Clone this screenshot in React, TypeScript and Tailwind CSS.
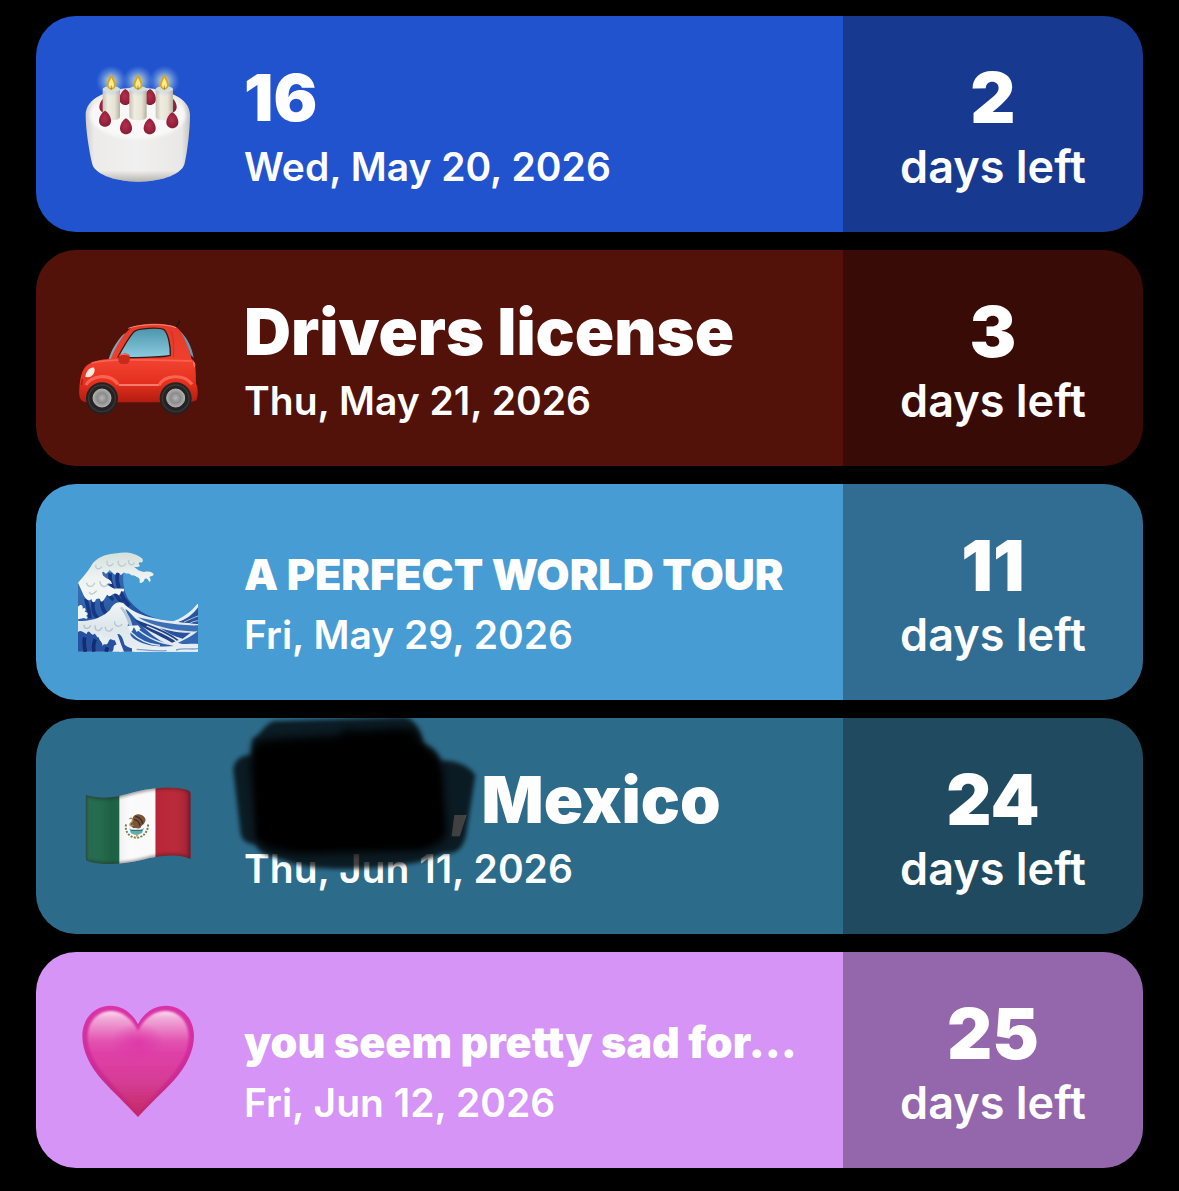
import React from "react";
import clsx from "clsx";

const CakeIcon = () => (
	<svg viewBox="24 27 360 360" className="size-full" aria-hidden="true">
		<defs>
			<linearGradient id="cakeSide" x1="0" x2="1" y1="0" y2="0">
				<stop offset="0" stopColor="#cfcecb" />
				<stop offset="0.08" stopColor="#ecebea" />
				<stop offset="0.5" stopColor="#f1f0f0" />
				<stop offset="0.92" stopColor="#e9e8e6" />
				<stop offset="1" stopColor="#c3c2bc" />
			</linearGradient>
			<linearGradient id="cakeShade" x1="0" x2="0" y1="0" y2="1">
				<stop offset="0.88" stopColor="#8d8c80" stopOpacity="0" />
				<stop offset="1" stopColor="#8d8c80" stopOpacity="0.6" />
			</linearGradient>
			<linearGradient id="candle" x1="0" x2="1" y1="0" y2="0">
				<stop offset="0" stopColor="#c8c4b4" />
				<stop offset="0.3" stopColor="#efede1" />
				<stop offset="0.7" stopColor="#e6e3d6" />
				<stop offset="1" stopColor="#b5b1a2" />
			</linearGradient>
			<radialGradient id="glow">
				<stop offset="0" stopColor="#fff6c0" stopOpacity="0.9" />
				<stop offset="0.5" stopColor="#b5d6dc" stopOpacity="0.5" />
				<stop offset="1" stopColor="#7aabf0" stopOpacity="0" />
			</radialGradient>
			<radialGradient id="berry" cx="0.45" cy="0.45" r="0.6">
				<stop offset="0" stopColor="#b3304c" />
				<stop offset="1" stopColor="#851a35" />
			</radialGradient>
			<filter id="cakeSoft">
				<feGaussianBlur stdDeviation="5" />
			</filter>
			<path id="berryShape" d="M0-24C9-20 18-6 18 6 18 17 10 24 0 24S-18 17-18 6C-18-6-9-20 0-24Z" />
		</defs>
		<path d="M47 180C46 130 115 98 203 98S361 130 360 180C360 225 352 290 344 325 338 355 282 380 205 380S72 355 66 325C58 290 47 225 47 180Z" fill="url(#cakeSide)" />
		<path d="M47 180C46 130 115 98 203 98S361 130 360 180C360 225 352 290 344 325 338 355 282 380 205 380S72 355 66 325C58 290 47 225 47 180Z" fill="url(#cakeShade)" />
		<ellipse cx="203" cy="180" rx="144" ry="72" fill="#f8f8f8" filter="url(#cakeSoft)" />
		<g fill="url(#berry)">
			<use href="#berryShape" x="106" y="150" />
			<use href="#berryShape" x="166" y="126" />
			<use href="#berryShape" x="240" y="126" />
			<use href="#berryShape" x="302" y="150" />
		</g>
		{[124, 204, 283].map((x) => (
			<g key={x} transform={`translate(${x} 0)`}>
				<path d="M-26 102V185C-26 199 26 199 26 185V102Z" fill="url(#candle)" />
				<ellipse cx="0" cy="102" rx="26" ry="9" fill="#eeeadb" />
				<circle cx="0" cy="78" r="46" fill="url(#glow)" />
				<path d="M0 57C6 68 14 80 13 91 12 100 6 104 0 104S-12 100-13 91C-14 80-6 68 0 57Z" fill="#d9a521" />
				<path d="M0 68C4 76 8 83 8 90 8 96 4 99 0 99S-8 96-8 90C-8 83-4 76 0 68Z" fill="#fbe98a" />
				<path d="M0 92V104" stroke="#8a6a2a" strokeWidth="2" />
			</g>
		))}
		<g fill="url(#berry)">
			<use href="#berryShape" x="105" y="191" />
			<use href="#berryShape" x="168" y="214" />
			<use href="#berryShape" x="239" y="214" />
			<use href="#berryShape" x="307" y="196" />
		</g>
	</svg>
);

const CarIcon = () => (
	<svg viewBox="24 -21 360 360" className="size-full" aria-hidden="true">
		<defs>
			<linearGradient id="carBody" x1="0" x2="0" y1="0" y2="1">
				<stop offset="0" stopColor="#e43a2a" />
				<stop offset="0.5" stopColor="#f0402e" />
				<stop offset="0.75" stopColor="#e5301f" />
				<stop offset="1" stopColor="#b21c10" />
			</linearGradient>
			<linearGradient id="carGlass" x1="0" x2="0" y1="0" y2="1">
				<stop offset="0" stopColor="#4b95ab" />
				<stop offset="1" stopColor="#8ccbe0" />
			</linearGradient>
			<radialGradient id="hub">
				<stop offset="0" stopColor="#b5b5b5" />
				<stop offset="0.55" stopColor="#8b8b8b" />
				<stop offset="1" stopColor="#b0b0b0" />
			</radialGradient>
		</defs>
		<path d="M317 68L329 49" stroke="#1c1514" strokeWidth="4" strokeLinecap="round" />
		<path d="M116 162C126 130 142 108 158 90L166 84 134 162Z" fill="#78a8b9" />
		<path d="M28 250C30 215 38 185 58 176 80 165 104 162 122 161 136 128 160 84 184 68 215 52 294 53 320 67 342 84 354 120 365 162 376 168 378 185 378 237 385 245 384 276 379 286L362 292H52C34 290 25 284 28 250Z" fill="url(#carBody)" />
		<path d="M332 80C352 98 366 128 371 158L362 150C354 124 344 100 332 80Z" fill="#639bb0" />
		<path d="M175 70C210 56 290 55 318 68" fill="none" stroke="#f58a78" strokeWidth="3" />
		<path d="M144 156C162 122 178 96 192 80 204 68 270 67 282 74 295 84 302 125 301 151 290 156 160 160 144 156Z" fill="url(#carGlass)" stroke="#391713" strokeWidth="4" strokeLinejoin="round" />
		<path d="M64 174C120 160 240 165 366 168" fill="none" stroke="#ff7562" strokeWidth="5" opacity="0.65" />
		<path d="M303 78C313 102 312 135 310 156" fill="none" stroke="#d42d20" strokeWidth="3" />
		<path d="M146 152C150 144 174 143 178 150 182 160 179 174 170 177H152C144 171 144 160 146 152Z" fill="#c92a1e" />
		<path d="M149 151C156 147 170 147 176 151" stroke="#ff7868" strokeWidth="3" fill="none" />
		<path d="M146 240H268" stroke="#ff9685" strokeWidth="4" />
		<path d="M46 215C48 198 60 186 72 188 78 196 70 216 53 217Z" fill="#ffe9dc" />
		<path d="M38 222C36 230 35 236 34 240" stroke="#a81d12" strokeWidth="4" />
		<path d="M368 168C378 172 378 184 372 188Z" fill="#ff705c" />
		<path d="M48 240C58 215 118 200 144 238" fill="none" stroke="#fa6553" strokeWidth="9" />
		<path d="M268 240C282 210 342 204 366 238" fill="none" stroke="#fa6553" strokeWidth="9" />
		{[96, 317].map((x) => (
			<g key={x}>
				<circle cx={x} cy="280" r="48" fill="#242222" />
				<circle cx={x} cy="280" r="40" fill="none" stroke="#3b3737" strokeWidth="4" />
				<circle cx={x} cy="279" r="27" fill="url(#hub)" stroke="#b2b2b2" strokeWidth="3" />
			</g>
		))}
	</svg>
);

const WaveIcon = () => (
	<svg viewBox="24 -24 360 360" className="size-full" aria-hidden="true">
		<defs>
			<linearGradient id="sea" x1="0" x2="1" y1="0" y2="1">
				<stop offset="0" stopColor="#3f74b8" />
				<stop offset="0.5" stopColor="#2252a0" />
				<stop offset="1" stopColor="#2e63ad" />
			</linearGradient>
			<linearGradient id="foam" x1="0" x2="0" y1="0" y2="1">
				<stop offset="0" stopColor="#d3e0dc" />
				<stop offset="0.5" stopColor="#eef3f2" />
				<stop offset="1" stopColor="#f4f7f7" />
			</linearGradient>
			<linearGradient id="swell" x1="0" x2="0" y1="0" y2="1">
				<stop offset="0" stopColor="#f2f6f6" />
				<stop offset="0.5" stopColor="#dde7ec" />
				<stop offset="1" stopColor="#e8eff3" />
			</linearGradient>
		</defs>
		<path d="M24 130L90 95 160 98C158 120 160 150 175 178 195 205 225 230 280 240L312 244C345 235 370 215 384 188V335H24Z" fill="url(#sea)" />
		<path d="M96 104C92 130 108 160 130 180M120 100C118 130 135 170 158 188M142 98C138 130 150 165 178 198M70 180C66 205 72 225 84 236M48 176C50 192 60 215 60 235M98 165C90 190 98 210 110 224" fill="none" stroke="#183681" strokeWidth="11" />
		<path d="M24 128C38 112 52 96 62 80 76 54 104 42 140 40 165 34 196 38 216 55 221 62 218 70 212 67 206 66 204 72 210 77 204 84 196 80 192 80 200 88 210 94 222 96 236 92 250 97 251 104 248 110 240 107 238 112 244 118 243 127 237 125 235 118 229 113 224 117 222 124 214 133 208 127 212 120 208 113 200 111 195 104 188 108 182 104 176 98 172 103 165 99 162 94 158 102 152 106 148 97 140 94 136 104 130 104 124 92 118 90 112 99 108 106 102 96 96 92 92 102 108 114 118 118 124 122 126 132 120 132 116 128 110 132 116 138 124 142 134 146 142 145 150 146 162 146 164 152 161 158 155 153 150 156 154 162 146 166 142 161 136 158 130 162 122 168 118 172 112 164 106 170 100 188 92 184 90 172 84 176 78 178 74 192 66 188 64 176 58 186 50 180 42 168 34 178 24 176Z" fill="url(#foam)" />
		<path d="M78 74C74 88 88 90 96 80M112 62C106 78 122 82 130 70M145 62C142 80 160 84 168 70M176 60C174 76 188 78 194 68M50 128C52 144 70 142 74 128M90 124C90 140 106 144 112 134M58 156C62 168 74 160 80 152" fill="none" stroke="#bccbd0" strokeWidth="4" />
		<path d="M24 200C32 190 40 196 38 206 46 200 50 210 44 216 54 214 56 224 48 228 58 232 50 240 42 234L24 238Z" fill="#eef4f4" />
		<path d="M24 242C60 246 98 232 120 210 128 192 144 180 160 190 178 208 202 222 240 232 288 244 330 246 384 252V335H24Z" fill="url(#swell)" />
		<path d="M24 276C34 268 42 280 50 282 56 262 64 288 70 284 76 274 80 296 86 292 90 306 96 302 98 318 104 306 110 322 116 304 122 290 128 304 134 300 138 308 142 322 148 335H24Z" fill="#2551a0" />
		<path d="M44 292C40 308 44 322 46 335M76 298C68 312 70 325 72 335M112 322L108 335" stroke="#132d70" strokeWidth="11" fill="none" />
		<path d="M134 316C144 308 156 320 156 335H126C134 330 128 322 134 316Z" fill="#e6eef2" />
		<path d="M86 286C92 278 100 288 98 298 108 286 118 294 114 304 108 314 104 306 100 312 94 306 88 300 86 286Z" fill="#e8eff3" />
		<path d="M142 282C156 280 160 302 164 314 172 322 186 324 200 330L190 335H162C154 316 148 298 142 282Z" fill="#2854a2" />
		<path d="M166 206C190 224 206 250 232 272 256 294 284 312 312 318 272 322 226 318 198 300 176 288 178 276 190 270 182 262 170 270 174 252 182 252 178 236 166 206Z" fill="#2d5da8" />
		<path d="M190 235C222 252 276 262 326 300L306 308C266 284 222 272 190 235Z" fill="#203f86" />
		<path d="M204 232C250 242 316 258 384 256V274C320 276 250 260 204 232Z" fill="#3c70b6" />
		<path d="M270 264C308 276 342 280 362 278L338 296C312 290 292 278 270 264Z" fill="#2852a0" />
		<path d="M150 204C166 224 172 240 176 256L188 262C186 240 172 216 156 200Z" fill="#b4c6d3" />
		<path d="M196 262C220 286 262 308 296 312M182 276C206 300 238 314 270 316M230 258C262 272 300 286 322 306" fill="none" stroke="#dbe7ef" strokeWidth="4" />
		<path d="M324 308C350 296 372 284 384 272V312C364 310 344 316 324 308Z" fill="#3268b2" />
		<path d="M300 246C338 238 366 212 384 190V202C370 222 346 242 318 248Z" fill="#e6eef2" />
		<path d="M326 246C350 240 370 224 384 212V252Z" fill="#2a529d" />
		<path d="M342 246C356 240 372 232 384 228M360 250C368 244 376 244 384 242" stroke="#a6c2dc" strokeWidth="3" fill="none" />
		<path d="M186 320C230 330 270 318 310 324 340 328 364 310 384 320V335H186Z" fill="#e9f0f3" />
		<path d="M200 328C230 330 260 334 290 332M318 330C340 322 362 330 384 326" stroke="#7d9fca" strokeWidth="4" fill="none" />
		<path d="M42 254C42 268 56 270 62 256M76 256C72 272 90 278 96 262M106 260C106 276 122 278 128 264M134 244C132 260 150 264 156 252" fill="none" stroke="#b3c4cf" strokeWidth="4" />
		<path d="M172 258L182 278 192 262 200 276 212 266 204 256Z" fill="#f0f5f5" />
	</svg>
);

const MexicoFlagIcon = () => (
	<svg viewBox="24 -27 360 360" className="size-full" aria-hidden="true">
		<defs>
			<clipPath id="flagClip">
				<path d="M47 60C90 72 125 70 160 60 215 44 290 28 350 44 359 47 362 50 362 58V252C330 236 280 240 235 250 180 265 110 274 58 260 50 257 47 254 47 248Z" />
			</clipPath>
			<linearGradient id="flagShade" x1="0" x2="1" y1="0" y2="0">
				<stop offset="0" stopColor="#000" stopOpacity="0.25" />
				<stop offset="0.07" stopColor="#fff" stopOpacity="0.02" />
				<stop offset="0.25" stopColor="#000" stopOpacity="0.08" />
				<stop offset="0.42" stopColor="#000" stopOpacity="0" />
				<stop offset="0.78" stopColor="#fff" stopOpacity="0.02" />
				<stop offset="0.95" stopColor="#000" stopOpacity="0.12" />
				<stop offset="1" stopColor="#000" stopOpacity="0.3" />
			</linearGradient>
			<filter id="flagSoft">
				<feGaussianBlur stdDeviation="5" />
			</filter>
		</defs>
		<g clipPath="url(#flagClip)">
			<path d="M40 30H148V280H40Z" fill="#20694a" />
			<path d="M148 30H257V280H148Z" fill="#fbfbfc" />
			<path d="M257 30H370V280H257Z" fill="#b92436" />
			<path d="M40 30H370V280H40Z" fill="url(#flagShade)" />
			<path d="M47 60C90 72 125 70 160 60 215 44 290 28 350 44 359 47 362 50 362 58V252C330 236 280 240 235 250 180 265 110 274 58 260 50 257 47 254 47 248Z" fill="none" stroke="#2c1d22" strokeWidth="9" opacity="0.5" filter="url(#flagSoft)" />
		</g>
		<path d="M168 148C164 172 180 188 200 188S236 168 234 145" fill="none" stroke="#738252" strokeWidth="6" strokeDasharray="6 4" />
		<path d="M178 160C190 170 210 170 222 158L216 174C204 182 190 180 182 174Z" fill="#5aafb5" />
		<path d="M180 150C186 140 190 138 188 130 190 120 204 115 214 120 226 124 230 136 224 142 222 150 214 150 212 158 204 164 198 156 190 160Z" fill="#79533a" />
		<path d="M196 124C206 126 216 134 218 146M192 134C202 134 208 144 210 152" stroke="#3f2a1c" strokeWidth="4" fill="none" />
		<path d="M178 132C188 124 192 138 182 144 176 150 184 156 190 150" stroke="#a98c58" strokeWidth="4" fill="none" />
		<path d="M184 166H216" stroke="#36716b" strokeWidth="4" />
		<path d="M196 176L200 188 206 176Z" fill="#c99a5b" />
	</svg>
);

const HeartIcon = () => (
	<svg viewBox="24 30 360 360" className="size-full" aria-hidden="true">
		<defs>
			<linearGradient id="heartEdge" x1="0" x2="0" y1="0" y2="1">
				<stop offset="0" stopColor="#dc32a8" />
				<stop offset="0.6" stopColor="#cc2c96" />
				<stop offset="1" stopColor="#c3286a" />
			</linearGradient>
			<linearGradient id="heartFill" x1="0" x2="0" y1="0" y2="1">
				<stop offset="0" stopColor="#fbe3f3" />
				<stop offset="0.06" stopColor="#f2b0dc" />
				<stop offset="0.18" stopColor="#ea80c6" />
				<stop offset="0.3" stopColor="#e253b0" />
				<stop offset="0.42" stopColor="#df40a7" />
				<stop offset="0.7" stopColor="#d63d96" />
				<stop offset="1" stopColor="#c52a67" />
			</linearGradient>
			<radialGradient id="heartCore">
				<stop offset="0" stopColor="#dd34a6" />
				<stop offset="1" stopColor="#dd34a6" stopOpacity="0" />
			</radialGradient>
			<filter id="heartSoft">
				<feGaussianBlur stdDeviation="3" />
			</filter>
		</defs>
		<path d="M204 103C185 65 154 47 121 47 70 47 37 89 37 138 37 184 61 231 99 273 130 307 170 344 204 381 238 344 278 307 310 273 348 231 372 184 372 138 372 89 339 47 288 47 255 47 223 65 204 103Z" fill="url(#heartEdge)" />
		<path d="M204 124C186 84 154 63 124 63 82 63 53 96 53 140 53 182 75 224 112 264 142 299 174 334 204 366 234 334 268 299 298 264 334 224 356 182 356 140 356 96 327 63 286 63 254 63 222 84 204 124Z" fill="url(#heartFill)" filter="url(#heartSoft)" />
		<ellipse cx="204" cy="160" rx="80" ry="60" fill="url(#heartCore)" opacity="0.8" />
	</svg>
);

const Scribble = () => (
	<svg
		viewBox="0 0 840 570"
		className="absolute left-[184px] -top-2 w-[280px] h-[190px] pointer-events-none"
		aria-hidden="true"
	>
		<defs>
			<filter id="inkSoft">
				<feGaussianBlur stdDeviation="7" />
			</filter>
			<filter id="inkSofter">
				<feGaussianBlur stdDeviation="13" />
			</filter>
		</defs>
		<path d="M40 180C42 145 70 135 94 135L98 85C120 80 130 45 160 34L550 22C590 25 600 70 612 100 640 115 655 130 662 152 710 150 750 170 766 196L742 350C738 400 720 425 690 430 640 430 640 455 560 462 440 480 260 485 200 452 150 440 115 430 108 404 78 400 65 390 62 370Z" fill="#000" opacity="0.74" filter="url(#inkSoft)" />
		<path d="M92 160L104 98C140 84 160 88 200 84L350 76 380 56 410 62 540 54 590 60 606 110C640 122 660 150 668 190L680 370C670 400 640 415 590 422L260 432C180 430 120 415 110 386Z" fill="#000" filter="url(#inkSofter)" />
		<path d="M110 120L600 105 650 160 665 370 600 410H220L112 380Z" fill="#000" filter="url(#inkSoft)" />
	</svg>
);

interface Countdown {
	title: React.ReactNode;
	small?: boolean;
	date: string;
	days: number;
	color: string;
	icon: React.ReactNode;
	overlay?: React.ReactNode;
}

const countdowns: Countdown[] = [
	{ title: "16", date: "Wed, May 20, 2026", days: 2, color: "bg-[#2253cf]", icon: <CakeIcon /> },
	{ title: "Drivers license", date: "Thu, May 21, 2026", days: 3, color: "bg-[#521109]", icon: <CarIcon /> },
	{
		title: "A PERFECT WORLD TOUR",
		small: true,
		date: "Fri, May 29, 2026",
		days: 11,
		color: "bg-[#479cd3]",
		icon: <WaveIcon />,
	},
	{
		title: (
			<>
				<span className="inline-block w-[204px]" />, Mexico
			</>
		),
		date: "Thu, Jun 11, 2026",
		days: 24,
		color: "bg-[#2d6b8a]",
		icon: <MexicoFlagIcon />,
		overlay: <Scribble />,
	},
	{
		title: "you seem pretty sad for…",
		small: true,
		date: "Fri, Jun 12, 2026",
		days: 25,
		color: "bg-[#d594f6]",
		icon: <HeartIcon />,
	},
];

const CountdownCard = ({ title, small, date, days, color, icon, overlay }: Countdown) => (
	<li className={clsx("relative flex h-[216px] overflow-hidden rounded-[40px]", color)}>
		<div className="flex min-w-0 flex-1 items-center pl-[42px]">
			<div className="size-[120px] shrink-0">{icon}</div>
			<div className="ml-[46px] flex min-w-0 flex-1 flex-col gap-1.5">
				<div className="flex h-20 items-end">
					<h2
						className={clsx(
							"whitespace-nowrap font-black",
							small ? "text-[43px] leading-[64px]" : "text-[65px] leading-[80px]",
						)}
					>
						{title}
					</h2>
				</div>
				<p className="whitespace-nowrap text-[39px] leading-[46px] font-semibold">{date}</p>
			</div>
		</div>
		<div className="flex w-[300px] shrink-0 flex-col items-center justify-center bg-black/30 pt-2">
			<span className="text-[70px] leading-[78px] font-black">{days}</span>
			<span className="text-[45px] leading-[60px] font-semibold">days left</span>
		</div>
		{overlay}
	</li>
);

const App = () => {
	return (
		<main className="min-h-screen bg-black px-9 pt-4 pb-[23px] font-['Inter',sans-serif] text-white">
			<ul className="flex flex-col gap-[18px]">
				{countdowns.map((item) => (
					<CountdownCard key={item.date} {...item} />
				))}
			</ul>
		</main>
	);
};

export default App;
